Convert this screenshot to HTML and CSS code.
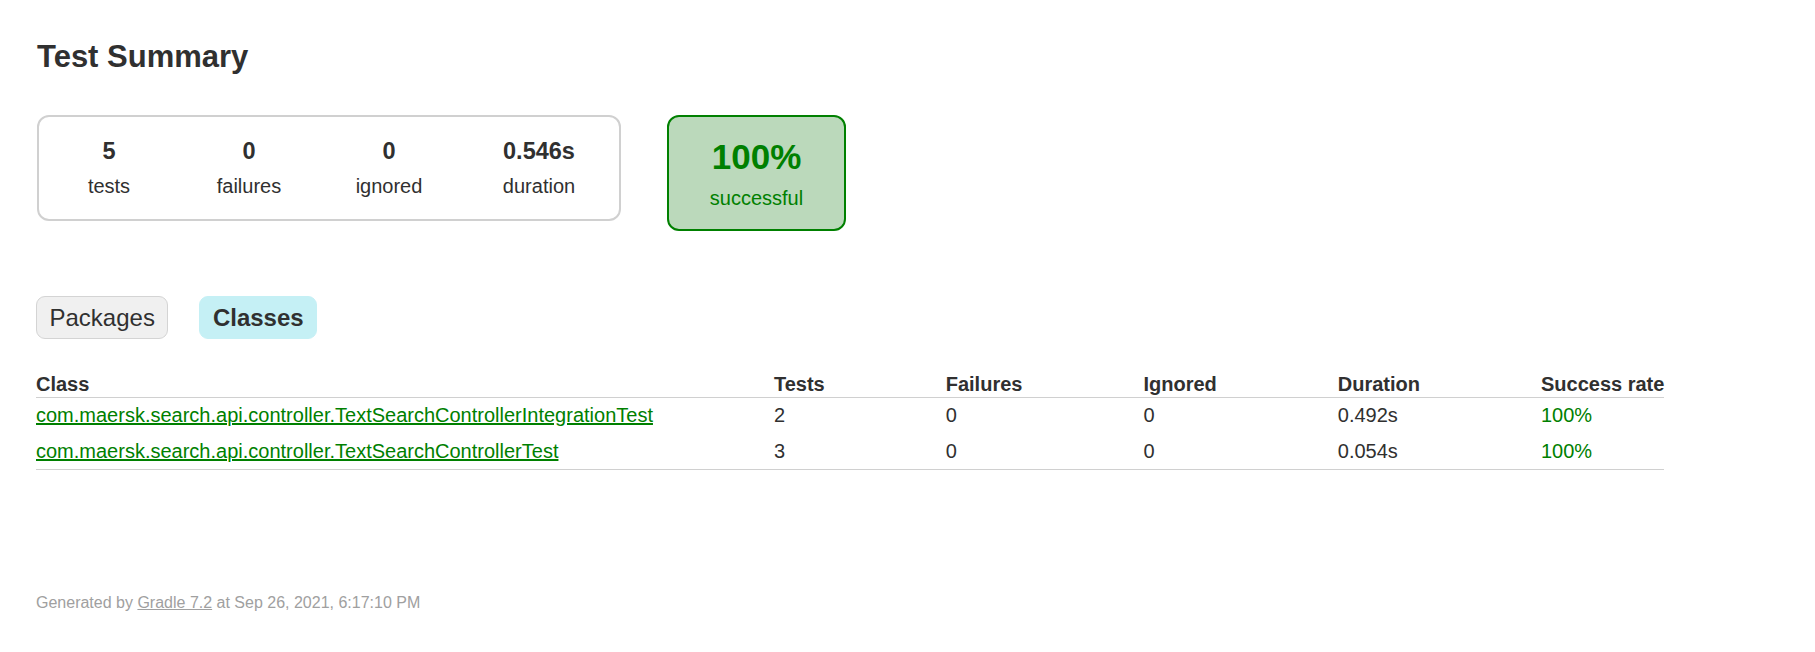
FILE: index.html
```html
<!DOCTYPE html>
<html>
<head>
<meta charset="utf-8">
<title>Test results - Test Summary</title>
<link rel="stylesheet" href="styles.css">
</head>
<body>
<div class="content">
  <h1 class="title">Test Summary</h1>
  <div class="summary">
    <div class="summary-group">
      <div class="info-box">
        <div class="counter">5</div>
        <p class="label">tests</p>
      </div>
      <div class="info-box">
        <div class="counter">0</div>
        <p class="label">failures</p>
      </div>
      <div class="info-box">
        <div class="counter">0</div>
        <p class="label">ignored</p>
      </div>
      <div class="info-box info-box-wide">
        <div class="counter">0.546s</div>
        <p class="label">duration</p>
      </div>
    </div>
    <div class="success-rate">
      <div class="percent">100%</div>
      <p class="label">successful</p>
    </div>
  </div>
  <ul class="tab-links">
    <li class="tab">Packages</li>
    <li class="tab tab-selected">Classes</li>
  </ul>
  <table class="results">
    <thead>
      <tr>
        <th>Class</th>
        <th>Tests</th>
        <th>Failures</th>
        <th>Ignored</th>
        <th>Duration</th>
        <th>Success rate</th>
      </tr>
    </thead>
    <tbody>
      <tr>
        <td class="success"><a href="#">com.maersk.search.api.controller.TextSearchControllerIntegrationTest</a></td>
        <td>2</td>
        <td>0</td>
        <td>0</td>
        <td>0.492s</td>
        <td class="success">100%</td>
      </tr>
      <tr>
        <td class="success"><a href="#">com.maersk.search.api.controller.TextSearchControllerTest</a></td>
        <td>3</td>
        <td>0</td>
        <td>0</td>
        <td>0.054s</td>
        <td class="success">100%</td>
      </tr>
    </tbody>
  </table>
  <div class="footer">
    <p class="footer-text">Generated by <a href="#">Gradle 7.2</a> at Sep 26, 2021, 6:17:10 PM</p>
  </div>
</div>
</body>
</html>
```
FILE: styles.css
```css
html, body {
  margin: 0;
  padding: 0;
  background: #ffffff;
}

body {
  font-family: "Liberation Sans", Arial, sans-serif;
  font-size: 20px;
  color: #303030;
}

.content {
  padding: 38px 37px 30px 36px;
}

.title {
  margin: 0 0 0 1px;
  font-size: 31px;
  line-height: 37px;
  font-weight: bold;
  white-space: nowrap;
}

.summary {
  margin: 40px 0 0 1px;
  display: flex;
  align-items: flex-start;
}

.summary-group {
  display: flex;
  border: 2px solid #d0d0d0;
  border-radius: 12px;
}

.info-box {
  width: 140px;
  padding: 20px 0 21px 0;
  text-align: center;
}

.info-box-wide {
  width: 160px;
}

.counter {
  font-size: 23.5px;
  line-height: 28px;
  font-weight: bold;
  margin-bottom: 10px;
}

.label {
  margin: 0;
  font-size: 20px;
  line-height: 23px;
}

.success-rate {
  margin-left: 46px;
  width: 175px;
  padding: 19px 0;
  text-align: center;
  border: 2px solid #008000;
  border-radius: 12px;
  background-color: #bbd9bb;
  color: #008000;
}

.percent {
  font-size: 35px;
  line-height: 41px;
  font-weight: bold;
  margin-bottom: 10px;
}

.tab-links {
  display: flex;
  gap: 31px;
  margin: 65px 0 0 0;
  padding: 0;
  list-style: none;
}

.tab {
  padding: 6.5px 12.5px;
  border: 1px solid #d4d4d4;
  border-radius: 9px;
  background-color: #f0f0f0;
  font-size: 24px;
  line-height: 28px;
  color: #303030;
}

.tab-selected {
  background-color: #c5f0f5;
  border-color: #c5f0f5;
  font-weight: bold;
}

.results {
  margin-top: 33px;
  border-collapse: collapse;
  border-bottom: 1px solid #d0d0d0;
}

.results th {
  text-align: left;
  white-space: nowrap;
  font-weight: bold;
  padding: 1px 0 1px 121px;
  line-height: 23px;
  border-bottom: 1px solid #d0d0d0;
}

.results td {
  white-space: nowrap;
  padding: 6px 0 6px 121px;
  line-height: 23.5px;
}

.results th:first-child,
.results td:first-child {
  padding-left: 0;
}

.success,
.success a {
  color: #008000;
}

.footer {
  margin-top: 124px;
}

.footer-text {
  margin: 0;
  font-size: 16px;
  line-height: 18px;
  color: #a0a0a0;
  white-space: nowrap;
}

.footer-text a {
  color: #a0a0a0;
}
```
